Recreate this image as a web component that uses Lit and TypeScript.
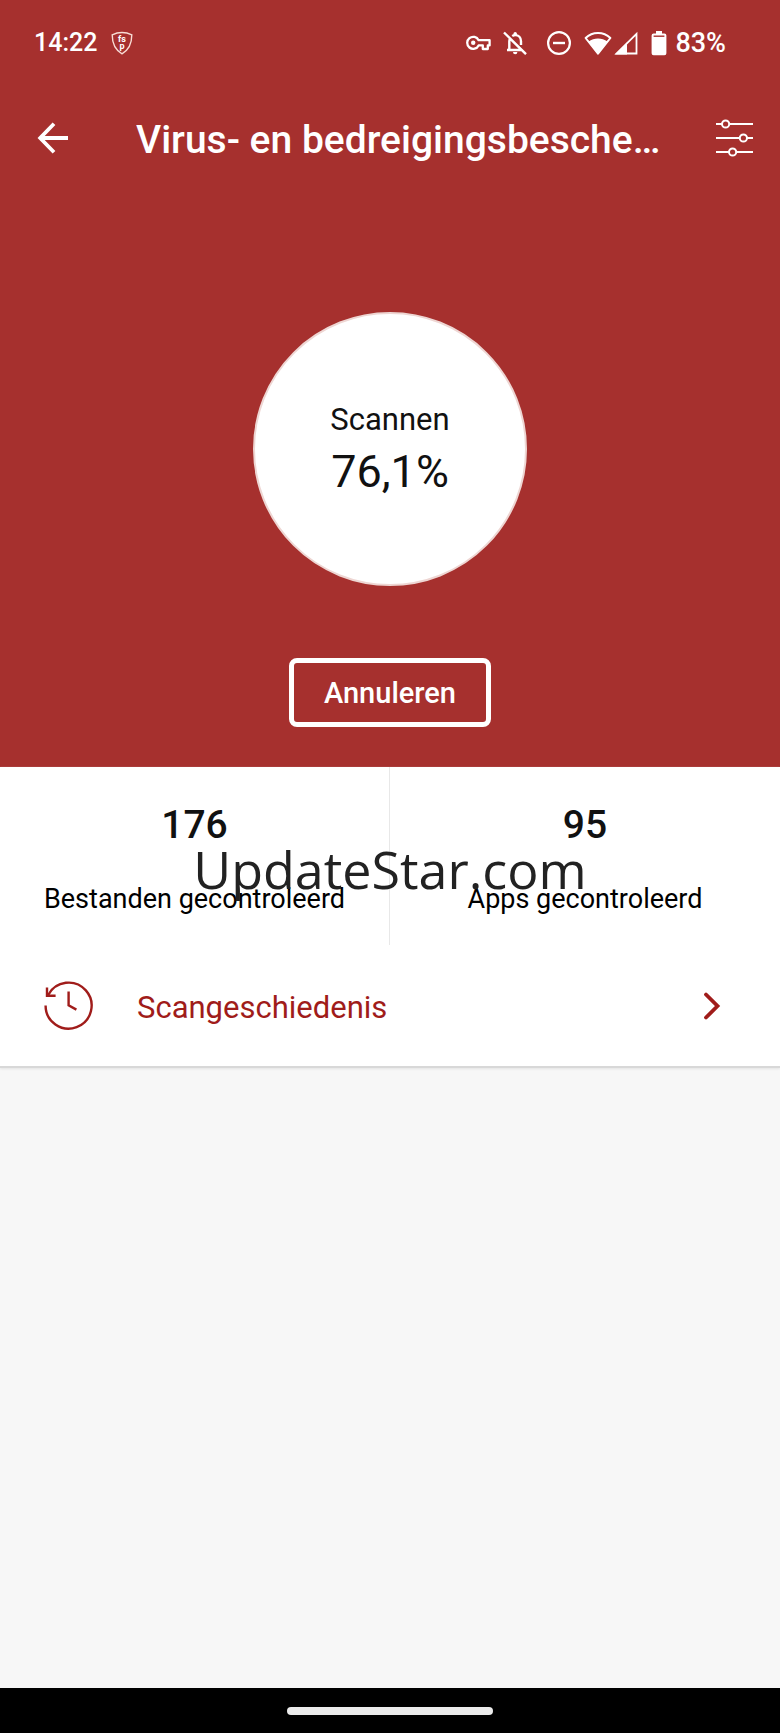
import { LitElement, html, css, svg } from "lit";
import { customElement, property, state } from "lit/decorators.js";

interface Stat {
  value: number;
  label: string;
}

@customElement("status-bar")
class StatusBar extends LitElement {
  @property() time = "";
  @property({ type: Number }) battery = 0;

  static styles = css`
    :host {
      display: flex;
      align-items: center;
      height: 86px;
      padding: 0 54px 0 34px;
      color: #fff;
      font-size: 27px;
      line-height: 32px;
      font-weight: 500;
    }
    svg {
      display: block;
      flex: none;
    }
    .time {
      font-size: 25px;
    }
    .shield {
      margin-left: 14px;
    }
    .shield-text {
      font: 700 9px Roboto, sans-serif;
    }
    .icons {
      display: flex;
      align-items: center;
      margin-left: auto;
    }
    .key {
      margin-right: 12px;
    }
    .bell {
      margin-right: 19px;
    }
    .dnd {
      margin-right: 12px;
    }
    .wifi {
      margin-right: 2px;
    }
    .signal {
      margin-right: 13px;
    }
    .battery {
      margin-right: 8px;
    }
  `;

  render() {
    return html`
      <span class="time">${this.time}</span>
      <svg class="shield" width="22" height="24" viewBox="0 0 22 24" fill="none" aria-hidden="true">
        <path
          d="M11 1.5C14 1.5 17.5 2.2 20.8 3.8C20.8 12.5 17.8 19 11 22.8C4.2 19 1.2 12.5 1.2 3.8C4.5 2.2 8 1.5 11 1.5Z"
          stroke="#f8dcd4"
          stroke-width="1.4"
        />
        ${svg`<text class="shield-text" x="11" y="11" text-anchor="middle" fill="#fff">fs</text>
        <text class="shield-text" x="11" y="18" text-anchor="middle" fill="#fff">p</text>`}
      </svg>
      <div class="icons">
        <svg class="key" width="25" height="16" viewBox="0 0 25 16" fill="none" aria-hidden="true">
          <path
            d="M12.6 5.2H23.6V10.4H21.8V14H16.8V10.4H12.6A6 6 0 1 1 12.6 5.2Z"
            stroke="#fff"
            stroke-width="2.3"
            stroke-linejoin="round"
          />
          <circle cx="7.2" cy="7.8" r="2.2" fill="#fff" />
        </svg>
        <svg class="bell" width="24" height="24" viewBox="0 0 24 24" fill="none" aria-hidden="true">
          <path
            d="M1 1.5L23 23.2M4 19H18M6.3 18.5V10.5C6.3 9.4 6.6 8.3 7 7.5M9.2 5.1C10.2 4.4 11.2 4.1 12.2 4.1C15.6 4.1 18 6.8 18 10.2V14"
            stroke="#fff"
            stroke-width="2.4"
          />
          <path d="M10.5 4V2.6A1.7 1.7 0 0 1 13.9 2.6V4ZM10 21H14.4A2.2 2.2 0 0 1 10 21Z" fill="#fff" />
        </svg>
        <svg class="dnd" width="26" height="26" viewBox="0 0 26 26" fill="none" stroke="#fff" aria-hidden="true">
          <circle cx="13" cy="13" r="10.9" stroke-width="2.2" />
          <path d="M7 13H19" stroke-width="2.4" />
        </svg>
        <svg class="wifi" width="28" height="26" viewBox="0 0 28 26" aria-hidden="true">
          <path
            d="M1.6 8C8.5 1.2 19.5 1.2 26.4 8L14 23.6Z"
            fill="none"
            stroke="#fff"
            stroke-width="2"
            stroke-linejoin="round"
          />
          <path d="M4.6 11.6C10 7.4 18 7.4 23.4 11.6L14 24Z" fill="#fff" />
        </svg>
        <svg class="signal" width="24" height="24" viewBox="0 0 24 24" aria-hidden="true">
          <path d="M2.5 22.5H22.5V2.8Z" fill="none" stroke="#fff" stroke-width="1.8" />
          <path d="M1 23.4L13 11.5V23.4Z" fill="#fff" />
        </svg>
        <svg class="battery" width="16" height="26" viewBox="0 0 16 26" fill="#fff" aria-hidden="true">
          <path d="M5 1H11V3.4H13.4Q15.4 3.4 15.4 5.4V23.2Q15.4 25.2 13.4 25.2H2.6Q.6 25.2 .6 23.2V5.4Q.6 3.4 2.6 3.4H5Z" />
          <path d="M2.6 6.2H13.4" stroke="#a6302e" stroke-width="1.4" />
        </svg>
        <span>${this.battery}%</span>
      </div>
    `;
  }
}

@customElement("app-root")
class AppRoot extends LitElement {
  @state() private progress = 76.1;
  @state() private stats: Stat[] = [
    { value: 176, label: "Bestanden gecontroleerd" },
    { value: 95, label: "Apps gecontroleerd" },
  ];

  static styles = css`
    :host {
      display: flex;
      flex-direction: column;
      position: relative;
      min-height: 100vh;
      background: #f7f7f7;
      color: #111;
      font-family: Roboto, sans-serif;
    }
    svg {
      display: block;
      flex: none;
    }
    h1,
    p,
    dl,
    dd {
      margin: 0;
    }
    button {
      font: inherit;
      color: inherit;
      background: none;
      border: 0;
      padding: 0;
      cursor: pointer;
    }
    .hero {
      background: #a6302e;
      color: #fff;
    }
    .app-bar {
      display: flex;
      align-items: center;
      height: 104px;
      padding: 0 26px 0 36px;
    }
    .title {
      flex: 1;
      min-width: 0;
      margin: 0 46px 0 66px;
      padding-top: 4px;
      overflow: hidden;
      text-overflow: ellipsis;
      white-space: nowrap;
      font-size: 39px;
      line-height: 48px;
      font-weight: 500;
    }
    .scan {
      display: flex;
      flex-direction: column;
      align-items: center;
      gap: 72px;
      padding: 122px 24px 40px;
    }
    .dial {
      box-sizing: border-box;
      display: flex;
      flex-direction: column;
      align-items: center;
      justify-content: center;
      width: 274px;
      height: 274px;
      padding-bottom: 2px;
      border: 2px solid #eed6d3;
      border-radius: 50%;
      background: #fff;
      color: #111;
    }
    .dial-label {
      font-size: 31px;
      line-height: 48px;
    }
    .dial-value {
      font-size: 45px;
      line-height: 56px;
    }
    .cancel {
      box-sizing: border-box;
      min-width: 202px;
      height: 69px;
      padding: 0 24px;
      border: 5px solid #fff;
      border-radius: 8px;
      font-size: 29px;
      line-height: 32px;
      font-weight: 500;
    }
    .panel {
      background: #fff;
      border-bottom: 2px solid #d8d8d8;
      box-shadow: 0 1px 2px #e4e4e4;
    }
    .stats {
      display: grid;
      grid-template-columns: 1fr 1fr;
    }
    .stat {
      display: flex;
      flex-direction: column-reverse;
      align-items: center;
      justify-content: flex-end;
      gap: 34px;
      padding: 34px 0 30px;
    }
    .stat:first-child {
      border-right: 1px solid #e8e8e8;
    }
    .stat-value {
      font-size: 39px;
      line-height: 48px;
      font-weight: 500;
    }
    .stat-label {
      font-size: 27px;
      line-height: 32px;
      color: #000;
    }
    .history {
      display: flex;
      align-items: center;
      height: 121px;
      padding: 0 59px 0 43px;
      color: #a01c1a;
      font-size: 31px;
      line-height: 40px;
      text-decoration: none;
    }
    .history-label {
      flex: 1;
      margin-left: 44px;
      padding-top: 4px;
    }
    .watermark {
      position: absolute;
      top: 50%;
      left: 50%;
      transform: translate(-50%, -50%);
      padding-top: 4px;
      color: #222;
      font-family: "Open Sans", sans-serif;
      font-size: 52px;
      line-height: 72px;
      pointer-events: none;
    }
    .nav {
      display: flex;
      align-items: center;
      justify-content: center;
      height: 45px;
      margin-top: auto;
      background: #000;
    }
    .handle {
      width: 206px;
      height: 8px;
      border-radius: 4px;
      background: #ebebeb;
    }
  `;

  render() {
    return html`
      <header class="hero">
        <status-bar time="14:22" battery="83"></status-bar>
        <div class="app-bar">
          <button type="button" aria-label="Terug">
            <svg width="34" height="34" viewBox="0 0 34 34" fill="none" stroke="#fff" stroke-width="3.8">
              <path d="M32 17H5M18 2.8L4.2 17L18 31.2" />
            </svg>
          </button>
          <h1 class="title">Virus- en bedreigingsbescherming</h1>
          <button type="button" aria-label="Instellingen">
            <svg width="40" height="40" viewBox="0 0 40 40" fill="none" stroke="#fff" stroke-width="2">
              <path d="M2 6H8M15 6H39M2 20H26M33 20H39M2 34H15M22 34H39" />
              <circle cx="11.6" cy="6" r="3.6" />
              <circle cx="29.4" cy="20" r="3.6" />
              <circle cx="18.6" cy="34" r="3.6" />
            </svg>
          </button>
        </div>
        <section class="scan">
          <div class="dial">
            <p class="dial-label">Scannen</p>
            <p class="dial-value">${this.progress.toFixed(1).replace(".", ",")}%</p>
          </div>
          <button type="button" class="cancel">Annuleren</button>
        </section>
      </header>
      <main class="panel">
        <dl class="stats">
          ${this.stats.map(
            (s) => html`
              <div class="stat">
                <dt class="stat-label">${s.label}</dt>
                <dd class="stat-value">${s.value}</dd>
              </div>
            `
          )}
        </dl>
        <a class="history" href="#geschiedenis">
          <svg width="50" height="50" viewBox="0 0 50 50" fill="none" stroke="currentColor" stroke-width="2.4" aria-hidden="true">
            <path d="M2.6 24.4A23 23 0 1 0 5.2 14" />
            <path d="M4 6.4V14.8H12.6" />
            <path d="M25.6 10.4V24.4L33.4 28.6" />
          </svg>
          <span class="history-label">Scangeschiedenis</span>
          <svg width="18" height="28" viewBox="0 0 18 28" fill="none" stroke="currentColor" stroke-width="3.8" stroke-linecap="round" aria-hidden="true">
            <path d="M3 2.5L14.5 14L3 25.5" />
          </svg>
        </a>
      </main>
      <div class="watermark">UpdateStar.com</div>
      <footer class="nav"><div class="handle"></div></footer>
    `;
  }
}
